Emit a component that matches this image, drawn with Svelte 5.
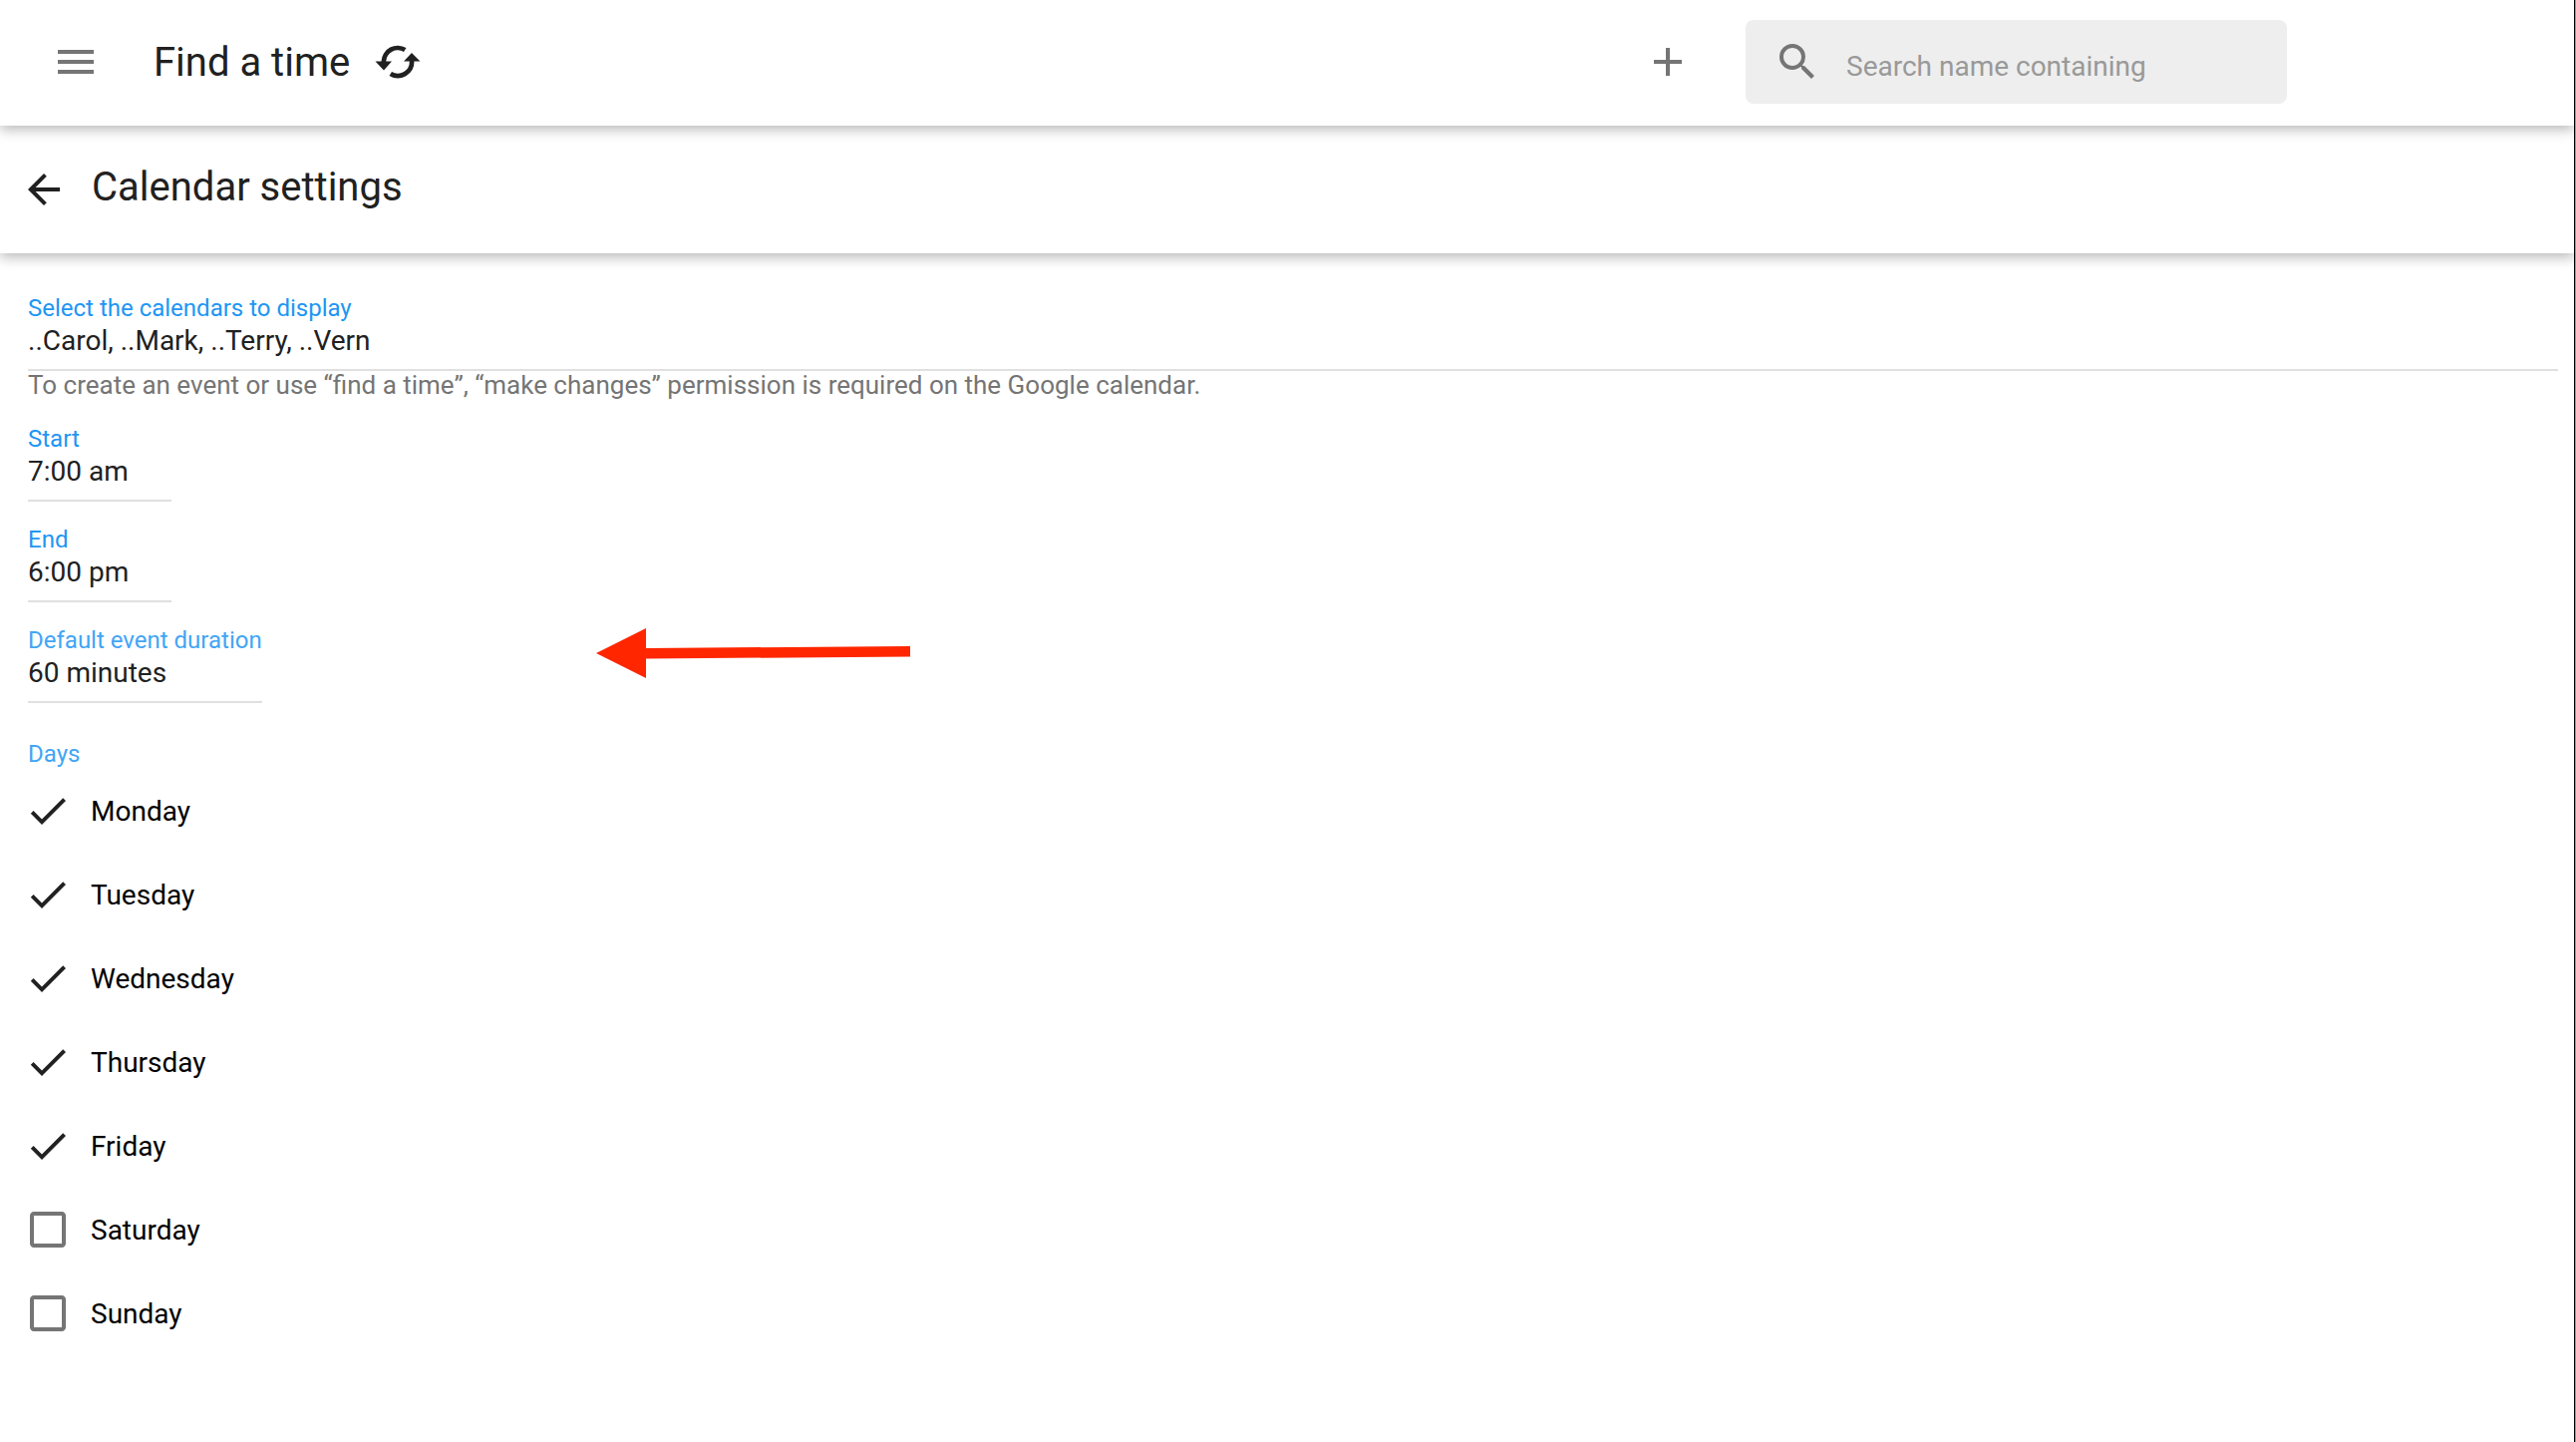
<script lang="ts">
	let search = $state('');
	let calendars = $state('..Carol, ..Mark, ..Terry, ..Vern');
	let start = $state('7:00 am');
	let end = $state('6:00 pm');
	let duration = $state('60 minutes');

	let days = $state([
		{ name: 'Monday', checked: true },
		{ name: 'Tuesday', checked: true },
		{ name: 'Wednesday', checked: true },
		{ name: 'Thursday', checked: true },
		{ name: 'Friday', checked: true },
		{ name: 'Saturday', checked: false },
		{ name: 'Sunday', checked: false }
	]);
</script>

<div class="page">
	<header class="bar top">
		<button class="icon menu" aria-label="Menu">
			<svg viewBox="0 0 24 24"><path d="M3 18h18v-2H3v2zm0-5h18v-2H3v2zm0-7v2h18V6H3z" /></svg>
		</button>
		<h1>Find a time</h1>
		<button class="icon sync" aria-label="Refresh">
			<svg viewBox="0 0 48 48">
				<path d="M1.500 23.500H7.500A16.500 16.500 0 0 1 32.500 10L30 14A11.800 11.800 0 0 0 12.200 23.500H18L10 32.500z" />
				<path d="M46.500 23.500H40.500A16.500 16.500 0 0 1 15.500 38L18 34A11.800 11.800 0 0 0 35.800 23.500H30L38 15z" />
			</svg>
		</button>
		<button class="icon add" aria-label="Add event">
			<svg viewBox="0 0 24 24"><path d="M19 13h-6v6h-2v-6H5v-2h6V5h2v6h6v2z" /></svg>
		</button>
		<label class="search">
			<svg viewBox="0 0 24 24">
				<path
					d="M15.500 14h-.79l-.28-.27A6.471 6.471 0 0 0 16 9.500 6.500 6.500 0 1 0 9.500 16c1.610 0 3.090-.59 4.230-1.570l.27.28v.79l5 4.990L20.490 19l-4.990-5zm-6 0C7.010 14 5 11.990 5 9.500S7.010 5 9.500 5 14 7.010 14 9.500 11.990 14 9.500 14z"
				/>
			</svg>
			<input type="text" placeholder="Search name containing" bind:value={search} />
		</label>
	</header>

	<div class="bar sub">
		<button class="icon back" aria-label="Back">
			<svg viewBox="0 0 24 24">
				<path d="M20 11H7.830l5.590-5.590L12 4l-8 8 8 8 1.410-1.410L7.830 13H20v-2z" />
			</svg>
		</button>
		<h2>Calendar settings</h2>
	</div>

	<main>
		<div class="field">
			<label for="calendars">Select the calendars to display</label>
			<select id="calendars" bind:value={calendars}>
				<option>..Carol, ..Mark, ..Terry, ..Vern</option>
			</select>
		</div>
		<p class="hint">
			To create an event or use “find a time”, “make changes” permission is required on the Google
			calendar.
		</p>

		<div class="field short">
			<label for="start">Start</label>
			<select id="start" bind:value={start}>
				<option>7:00 am</option>
			</select>
		</div>
		<div class="field short">
			<label for="end">End</label>
			<select id="end" bind:value={end}>
				<option>6:00 pm</option>
			</select>
		</div>
		<div class="field short light">
			<label for="duration">Default event duration</label>
			<select id="duration" bind:value={duration}>
				<option>60 minutes</option>
			</select>
			<svg class="pointer" viewBox="0 0 316 52" aria-hidden="true">
				<path d="M0 26L50 1V21L315 19V29.500L50 31.500V51z" />
			</svg>
		</div>

		<fieldset>
			<legend>Days</legend>
			{#each days as day}
				<label class="day">
					<input type="checkbox" bind:checked={day.checked} />
					<svg viewBox="0 0 24 24" class:checked={day.checked}>
						{#if day.checked}
							<path d="M9 16.200L4.800 12l-1.400 1.400L9 19 21 7l-1.400-1.400L9 16.200z" />
						{:else}
							<path
								d="M19 5v14H5V5h14m0-2H5c-1.100 0-2 .9-2 2v14c0 1.100.9 2 2 2h14c1.100 0 2-.9 2-2V5c0-1.100-.9-2-2-2z"
							/>
						{/if}
					</svg>
					{day.name}
				</label>
			{/each}
		</fieldset>
	</main>
</div>

<style>
	:global(body) {
		margin: 0;
		/* sliver of the desktop behind the window edge */
		border-right: 1px solid #9a9c9c;
	}

	.page {
		min-height: 100vh;
		box-sizing: border-box;
		overflow: hidden;
		border-right: 1px solid #000;
		background: #fff;
		color: #212121;
		font-family: Roboto, sans-serif;
		font-size: 28px;
	}

	.bar {
		position: relative;
		display: flex;
		align-items: center;
		box-sizing: border-box;
		background: #fff;
		box-shadow: 0 4px 12px rgba(0, 0, 0, 0.28);
	}

	.top {
		z-index: 2;
		height: 126px;
		padding: 0 288px 2px 52px;
	}

	.sub {
		z-index: 1;
		height: 128px;
		padding: 0 20px;
	}

	h1,
	h2 {
		margin: 0;
		font-size: 40px;
		font-weight: 400;
		line-height: 48px;
	}

	h1 {
		margin-left: 54px;
		padding-top: 2px;
	}

	h2 {
		margin-left: 24px;
		padding-bottom: 4px;
	}

	.icon {
		flex: none;
		padding: 0;
		border: 0;
		background: none;
		cursor: pointer;
	}

	svg {
		display: block;
		flex: none;
		width: 48px;
		height: 48px;
		fill: #757575;
	}

	.sync svg,
	.back svg,
	.checked {
		fill: #212121;
	}

	.sync {
		margin-left: 24px;
	}

	.add {
		margin-left: auto;
	}

	.search {
		display: flex;
		align-items: center;
		box-sizing: border-box;
		width: 543px;
		height: 84px;
		margin-left: 54px;
		padding: 0 28px;
		border-radius: 8px;
		background: #eee;
	}

	.search input {
		flex: 1;
		min-width: 0;
		margin-left: 25px;
		padding: 8px 0 0;
		border: 0;
		outline: 0;
		background: none;
		color: #212121;
		font: inherit;
	}

	.search input::placeholder {
		color: #999;
		opacity: 1;
	}

	main {
		padding: 40px 16px 40px 28px;
	}

	.field {
		position: relative;
		display: grid;
		border-bottom: 2px solid #e0e0e0;
	}

	.short {
		width: fit-content;
		min-width: 144px;
		margin-bottom: 23px;
	}

	.field label,
	legend {
		color: #2196f3;
		font-size: 24px;
		line-height: 30px;
	}

	.light label,
	legend {
		color: #42a5f5;
	}

	select {
		appearance: none;
		height: 46px;
		padding: 0 0 10px;
		border: 0;
		outline: 0;
		background: none;
		color: #212121;
		font: inherit;
		line-height: 36px;
	}

	.hint {
		margin: 0 0 25px;
		color: #757575;
		font-size: 26px;
		line-height: 28px;
	}

	.pointer {
		position: absolute;
		top: 2px;
		left: 570px;
		width: 316px;
		height: 52px;
		fill: #ff2600;
	}

	fieldset {
		margin: 36px 0 0;
		padding: 0;
		border: 0;
	}

	legend {
		padding: 0;
	}

	.day {
		position: relative;
		display: flex;
		align-items: center;
		gap: 19px;
		width: fit-content;
		height: 84px;
		color: #000;
		cursor: pointer;
	}

	.day svg {
		margin-left: -4px;
	}

	.day input {
		position: absolute;
		opacity: 0;
	}
</style>
